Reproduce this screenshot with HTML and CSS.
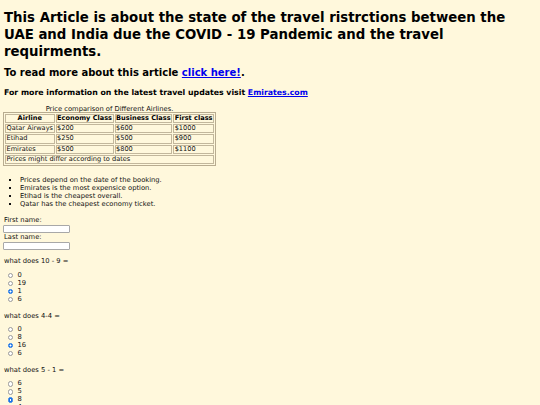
FILE: index.html
```html
<!DOCTYPE html>
<html>
<head>
<meta charset="utf-8">
<link rel="stylesheet" href="styles.css">
</head>
<body>
<h1 class="title">This Article is about the state of the travel ristrctions between the UAE and India due the COVID - 19 Pandemic and the travel requirments.</h1>
<h2 class="sub">To read more about this article <a href="#">click here!</a>.</h2>
<h3 class="info">For more information on the latest travel updates visit <a href="#">Emirates.com</a></h3>
<table class="prices">
<caption>Price comparison of Different Airlines.</caption>
<tr><th>Airline</th><th>Economy Class</th><th>Business Class</th><th>First class</th></tr>
<tr><td>Qatar Airways</td><td>$200</td><td>$600</td><td>$1000</td></tr>
<tr><td>Etihad</td><td>$250</td><td>$500</td><td>$900</td></tr>
<tr><td>Emirates</td><td>$500</td><td>$800</td><td>$1100</td></tr>
<tr><td colspan="4">Prices might differ according to dates</td></tr>
</table>
<ul class="notes">
<li>Prices depend on the date of the booking.</li>
<li>Emirates is the most expensice option.</li>
<li>Etihad is the cheapest overall.</li>
<li>Qatar has the cheapest economy ticket.</li>
</ul>
<form class="form">
<label class="lbl lbl1">First name:</label>
<input class="txt" type="text">
<label class="lbl lbl2">Last name:</label>
<input class="txt" type="text">
<p class="q q1">what does 10 - 9 =</p>
<div class="opts">
<label class="opt"><input type="radio" name="a"><span>0</span></label>
<label class="opt"><input type="radio" name="a"><span>19</span></label>
<label class="opt"><input type="radio" name="a" checked><span>1</span></label>
<label class="opt"><input type="radio" name="a"><span>6</span></label>
</div>
<p class="q">what does 4-4 =</p>
<div class="opts">
<label class="opt"><input type="radio" name="b"><span>0</span></label>
<label class="opt"><input type="radio" name="b"><span>8</span></label>
<label class="opt"><input type="radio" name="b" checked><span>16</span></label>
<label class="opt"><input type="radio" name="b"><span>6</span></label>
</div>
<p class="q">what does 5 - 1 =</p>
<div class="opts">
<label class="opt"><input type="radio" name="c"><span>6</span></label>
<label class="opt"><input type="radio" name="c"><span>5</span></label>
<label class="opt"><input type="radio" name="c" checked><span>8</span></label>
<label class="opt"><input type="radio" name="c"><span>4</span></label>
</div>
</form>
</body>
</html>
```
FILE: styles.css
```css
html { background: #fff8dc; }
body {
  margin: 0;
  padding: 0 4px;
  font-family: "DejaVu Sans", Verdana, sans-serif;
  font-size: 6.75px;
  line-height: 7.67px;
  color: #111;
  background: #fff8dc;
}
.title {
  font-size: 13.3px;
  line-height: 17px;
  font-weight: bold;
  color: #000;
  margin: 8.9px 0 7px 0;
}
.sub {
  font-size: 10px;
  line-height: 12px;
  font-weight: bold;
  color: #000;
  margin: 0 0 9.6px 0;
}
.info {
  font-size: 7.8px;
  line-height: 9px;
  font-weight: bold;
  color: #000;
  margin: 0 0 8.6px 0;
}
a { color: #0000ee; text-decoration: underline; }
.prices {
  border: 1px solid #b8ac90;
  border-spacing: 1px;
  margin-left: -1px;
  font-size: 6.6px;
}
.prices caption { line-height: 6px; padding: 0; font-size: 6.75px; }
.prices th, .prices td {
  border: 1px solid #c2b79c;
  padding: 0 0.5px;
  line-height: 7.2px;
  text-align: left;
}
.prices th { font-weight: bold; text-align: center; color: #000; }
.notes {
  margin: 11.4px 0 8.7px 0;
  padding-left: 16px;
  list-style: square;
}
.form { display: flex; flex-direction: column; align-items: flex-start; }
.lbl { display: block; }
.lbl1 { margin-top: 0; }
.lbl2 { margin-top: 1.2px; }
.txt {
  width: 67px;
  height: 8.4px;
  box-sizing: border-box;
  border: 1px solid #a8a8a8;
  border-radius: 1px;
  background: #fff;
  margin: 0 0 0 -1px;
  padding: 0;
}
.q { margin: 9.3px 0 5.3px 0; }
.q1 { margin-top: 8.3px; }
.opts { display: flex; flex-direction: column; }
.opt { display: flex; align-items: center; height: 8px; }
.opt input {
  appearance: none;
  -webkit-appearance: none;
  width: 5.4px;
  height: 5.4px;
  border: 0.6px solid #9a9a9a;
  border-radius: 50%;
  background: #fff;
  margin: 0 4.4px 0 3.8px;
  box-sizing: border-box;
  flex: none;
}
.opt input:checked {
  background: radial-gradient(circle, #fff 0 0.9px, #1a73e8 1.1px);
  border-color: #1a73e8;
}
```
